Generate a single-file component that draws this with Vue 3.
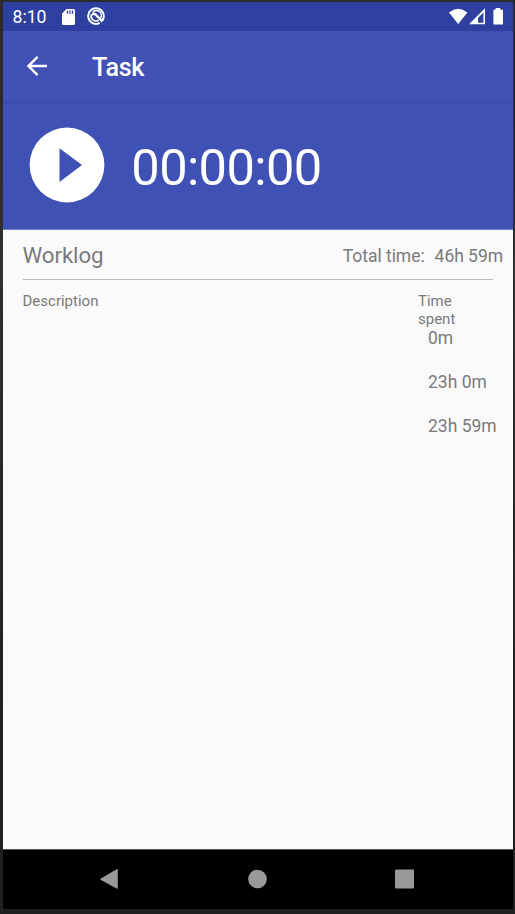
<script setup>
const total = '46h 59m'
const entries = ['0m', '23h 0m', '23h 59m']
</script>

<template>
  <div class="frame">
    <main class="screen">
      <div class="status">
        <span class="clock">8:10</span>
        <svg class="sd" width="13" height="16" viewBox="0 0 13 16">
          <path fill="#fff" d="M4.5 0H11.5Q13 0 13 1.5V14.5Q13 16 11.5 16H1.5Q0 16 0 14.5V4.5Z" />
          <path stroke="#2f3f9f" stroke-width="1.3" d="M5.5 1.6V4.7M8 1.6V4.7M10.5 1.6V4.7" />
        </svg>
        <svg class="sync" width="18" height="18" viewBox="0 0 18 18" fill="none" stroke="#fff">
          <path stroke-width="1.9" d="M15.4 13.4A7.8 7.8 0 1 0 12.8 15.8" />
          <path stroke-width="1.6" d="M5.6 5.4A4.9 4.9 0 0 1 13.2 11.6M11.6 13.2A4.9 4.9 0 0 1 4.3 7.6" />
          <path stroke-width="2.4" d="M4.9 8Q7 5.8 9 7.8L15.5 14.6" />
        </svg>
        <div class="signals">
          <svg width="51" height="18" viewBox="0 0 51 18">
            <path fill="#fff" d="M0 4.4Q9.2-2.8 18.4 4.4L9.2 15.9Z" />
            <path fill="#fff" fill-rule="evenodd" d="M20 16.3L36 .3V16.3ZM29 14.7H34.4V4.5L29 10Z" />
            <path fill="#fff" d="M46.6 0H51.4V1.8H54V16.5H44.4V1.8H46.6Z" />
          </svg>
        </div>
      </div>
      <header class="appbar">
        <svg width="20" height="20" viewBox="0 0 20 20" fill="none" stroke="#fff" stroke-width="2.3">
          <path d="M20 10H2M10.6 .9L1.5 10L10.6 19.1" />
        </svg>
        <h1>Task</h1>
      </header>
      <section class="timer">
        <svg width="76" height="76" viewBox="0 0 76 76">
          <circle cx="38" cy="38" r="37.4" fill="#fff" />
          <path d="M30.5 21.3V55L53 38.1Z" fill="#4051b5" />
        </svg>
        <span>00:00:00</span>
      </section>
      <section class="worklog">
        <div class="summary">
          <h2>Worklog</h2>
          <span class="label">Total time:</span>
          <span>{{ total }}</span>
        </div>
        <div class="columns">
          <span>Description</span>
          <span class="spent">Time spent</span>
        </div>
        <ul>
          <li v-for="entry in entries" :key="entry">{{ entry }}</li>
        </ul>
      </section>
      <nav>
        <svg width="510" height="59" viewBox="0 0 510 59" fill="#999">
          <path d="M97.5 28.8L113.6 19.2Q114.8 18.6 114.8 20V37.8Q114.8 39.2 113.6 38.5L97.5 29.8Q96.8 29.3 97.5 28.8Z" />
          <circle cx="254.5" cy="29" r="9.3" />
          <rect x="392" y="19.5" width="19" height="19" rx="1" />
        </svg>
      </nav>
    </main>
  </div>
</template>

<style>
body { background: #202022; }
</style>

<style scoped>
.frame {
  box-sizing: border-box;
  height: 914px;
  padding: 2px 2px 5px 3px;
  background: linear-gradient(#2b2b2b, #303030 30%, #202022 80%);
  font-family: Roboto, "Liberation Sans", sans-serif;
}
.screen {
  display: flex;
  flex-direction: column;
  height: 907px;
  background: #fafafa;
  color: #7a7a7a;
}
.status {
  display: flex;
  height: 29px;
  background: #2f3f9f;
  color: #fff;
}
.clock { width: 49px; padding: 5px 0 0 9.5px; font-size: 17.6px; line-height: 21px; }
.sd { margin-top: 7px; }
.sync { margin: 5px 0 0 12.5px; }
.signals { margin: 6px 13.5px 0 auto; }
.signals svg { display: block; overflow: visible; }
.appbar {
  display: flex;
  align-items: center;
  box-sizing: border-box;
  height: 70px;
  padding-left: 24px;
  background: #4151b5;
  color: #fff;
}
h1, h2 { margin: 0; }
h1 { margin: 4px 0 0 45px; font-size: 25.2px; font-weight: 500; letter-spacing: -.3px; line-height: 30px; }
.timer {
  display: flex;
  box-sizing: border-box;
  height: 129px;
  padding: 26px 0 0 26px;
  border-bottom: 1px solid #7883cb;
  background: linear-gradient(#3b4ba9, #4051b5 5px);
  color: #fff;
}
.timer span { margin: 11px 0 0 26.3px; font-size: 50.6px; letter-spacing: -.6px; line-height: 60px; }
.worklog { flex: 1; }
.summary {
  display: flex;
  align-items: center;
  box-sizing: border-box;
  height: 49px;
  padding: 2px 10px 0 19.5px;
  font-size: 17.5px;
  letter-spacing: -.04px;
  white-space: nowrap;
}
h2 { margin: -2px auto 0 0; font-size: 22.3px; font-weight: 400; letter-spacing: -.1px; }
.label { margin-right: 10px; }
.columns {
  display: flex;
  justify-content: space-between;
  height: 49px;
  box-sizing: border-box;
  margin: 0 20.5px 0 19.5px;
  padding-top: 12px;
  border-top: 1px solid #b8b8b8;
  font-size: 15px;
  line-height: 18px;
}
.spent { box-sizing: border-box; width: 74.5px; padding-right: 30px; }
ul { margin: 0 0 0 425px; padding: 0; list-style: none; }
li { height: 44px; font-size: 17.5px; line-height: 21px; }
nav { height: 59px; border-top: 1px solid #555; background: #000; }
nav svg { display: block; }
</style>
